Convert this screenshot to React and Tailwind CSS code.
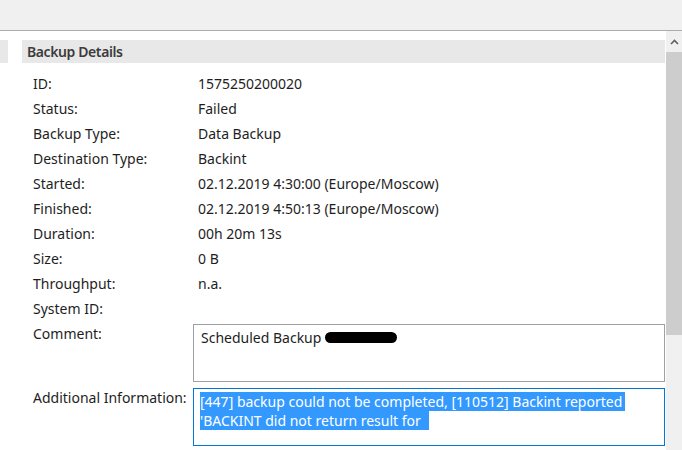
import React from 'react';

const rows = [
    ['ID:', '1575250200020'],
    ['Status:', 'Failed'],
    ['Backup Type:', 'Data Backup'],
    ['Destination Type:', 'Backint'],
    ['Started:', '02.12.2019 4:30:00 (Europe/Moscow)'],
    ['Finished:', '02.12.2019 4:50:13 (Europe/Moscow)'],
    ['Duration:', '00h 20m 13s'],
    ['Size:', '0 B'],
    ['Throughput:', 'n.a.'],
    ['System ID:', ''],
];

const Scrollbar = () => (
    <div className="w-[16px] bg-[#f0f0f0] flex flex-col">
        <div className="h-[21px] flex items-center justify-center">
            <svg width="9" height="6" viewBox="0 0 9 6">
                <path d="M1 5 L4.5 1.5 L8 5" fill="none" stroke="#606060" strokeWidth="1.6" />
            </svg>
        </div>
        <div className="h-[283px] bg-[#cdcdcd]" />
    </div>
);

export default function App() {
    return (
        <div className="w-[682px] h-[450px] overflow-hidden bg-white flex flex-col text-[14px] text-[#1e1e1e]" style={{ fontFamily: '"Noto Sans", sans-serif' }}>
            <div className="h-[31px] shrink-0 bg-[#f0f0f0] border-b border-[#acacac]" />
            <div className="flex flex-1 min-h-0">
                <div className="flex-1 pt-[9px]">
                    <div className="flex h-[23px]">
                        <div className="w-[8px] bg-[#e8e8e8]" />
                        <div className="flex-1 ml-[14px] mr-[1px] bg-[#e8e8e8] flex items-center pl-[5px] font-semibold text-[14px] text-[#3c3c3c] tracking-[-0.4px]">
                            Backup Details
                        </div>
                    </div>
                    <div className="mt-[8px]">
                        {rows.map(([label, value]) => (
                            <div key={label} className="h-[25px] flex items-center">
                                <div className="w-[198px] pl-[33px]">{label}</div>
                                <div>{value}</div>
                            </div>
                        ))}
                    </div>
                    <div className="flex">
                        <div className="w-[193px] pl-[33px] h-[25px] flex items-center">Comment:</div>
                        <div className="flex-1 mr-[1px] mt-[3px] h-[58px] border border-[#a0a0a0] pl-[7px] pt-[3px] leading-[19px] flex items-start">
                            <span>Scheduled Backup</span>
                            <div className="ml-[4px] mt-[4px] w-[72px] h-[11px] rounded-full bg-black" />
                        </div>
                    </div>
                    <div className="flex mt-[6px]">
                        <div className="w-[193px] pl-[33px] leading-[19px]">Additional Information:</div>
                        <div className="flex-1 mr-[1px] h-[58px] border border-[#0078d7] pl-[6px] pt-[3px] leading-[19px]">
                            <div><span className="bg-[#3399ff] text-white pr-[3px]">[447] backup could not be completed, [110512] Backint reported</span></div>
                            <div><span className="bg-[#3399ff] text-white pr-[8px]">'BACKINT did not return result for</span></div>
                        </div>
                    </div>
                </div>
                <Scrollbar />
            </div>
        </div>
    );
}
